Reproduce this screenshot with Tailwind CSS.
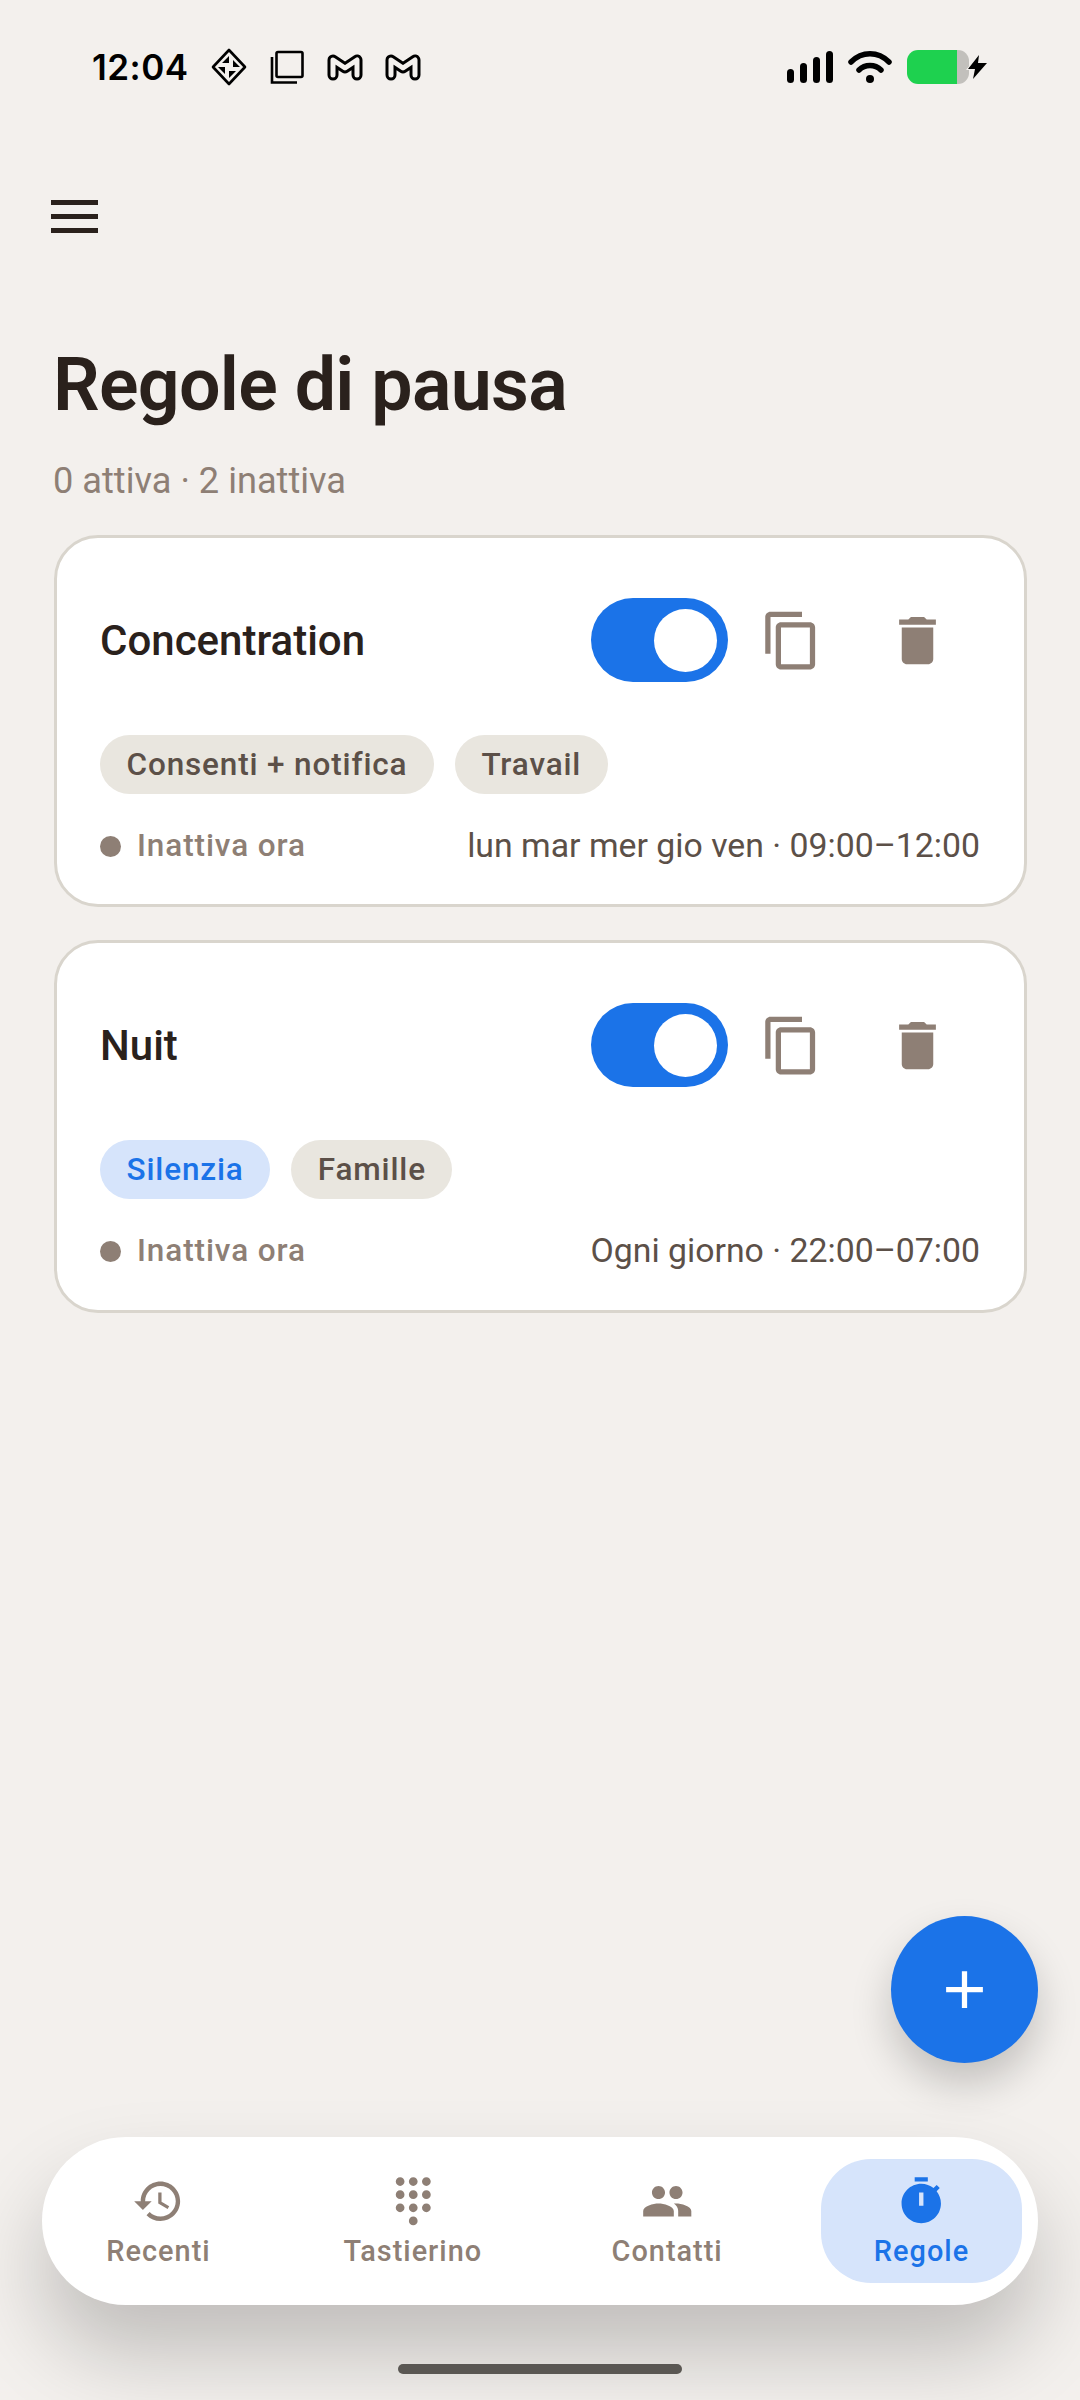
<!DOCTYPE html>
<html lang="it">
<head>
    <meta charset="UTF-8">
    <meta name="viewport" content="width=device-width, initial-scale=1.0">
    <title>Regole di pausa</title>
    <script src="https://cdn.jsdelivr.net/npm/@tailwindcss/browser@4"></script>
</head>
<body class="bg-[#f3f0ed] font-['Roboto',sans-serif] overflow-hidden">
    <div class="flex flex-col w-[1080px] h-[2400px]">

        <!-- Status bar -->
        <div class="flex items-center justify-between h-[134px] pl-[92px] pr-[91px] text-black">
            <div class="flex items-center">
                <span class="font-['Inter',sans-serif] font-semibold text-[35px] leading-none tracking-[0.5px] w-[119px]">12:04</span>
                <svg class="w-[36px] h-[38px]" viewBox="0 0 36 38">
                    <path d="M18 2 34 19 18 36 2 19Z" fill="none" stroke="#000" stroke-width="2.6" stroke-linejoin="round"/>
                    <path d="M18 8 11 15h7zM29 19 22 12v7zM18 30 25 23h-7zM7 19 14 26v-7z" fill="#000"/>
                </svg>
                <svg class="w-[34px] h-[34px] ml-[23px]" viewBox="0 0 34 34" fill="none" stroke="#000" stroke-width="2.6">
                    <rect x="6.5" y="2" width="26" height="25" rx="1.5"/>
                    <path d="M2 7V32.5H27"/>
                </svg>
                <svg class="w-[38px] h-[30px] ml-[22px]" viewBox="0 0 38 30" fill="none" stroke-linejoin="round" stroke-linecap="round">
                    <path d="M7 23V8L19 16 31 8V23" stroke="#000" stroke-width="11"/>
                    <path d="M7 23V8L19 16 31 8V23" stroke="#f3f0ed" stroke-width="5"/>
                </svg>
                <svg class="w-[38px] h-[30px] ml-[20px]" viewBox="0 0 38 30" fill="none" stroke-linejoin="round" stroke-linecap="round">
                    <path d="M7 23V8L19 16 31 8V23" stroke="#000" stroke-width="11"/>
                    <path d="M7 23V8L19 16 31 8V23" stroke="#f3f0ed" stroke-width="5"/>
                </svg>
            </div>
            <div class="flex items-center">
                <svg class="w-[46px] h-[34px]" viewBox="0 0 46 34" fill="#000">
                    <rect x="0" y="19" width="7" height="14" rx="3.5"/>
                    <rect x="13" y="13" width="7" height="20" rx="3.5"/>
                    <rect x="26" y="7" width="7" height="26" rx="3.5"/>
                    <rect x="39" y="1" width="7" height="32" rx="3.5"/>
                </svg>
                <svg class="w-[44px] h-[34px] ml-[15px]" viewBox="0 0 44 34" fill="none" stroke="#000" stroke-width="5.5" stroke-linecap="round">
                    <path d="M3 12C14 1 30 1 41 12"/>
                    <path d="M11 20C17 14 27 14 33 20"/>
                    <circle cx="22" cy="29" r="4" fill="#000" stroke="none"/>
                </svg>
                <div class="flex h-[34px] w-[62px] ml-[15px] rounded-[11px] overflow-hidden">
                    <div class="w-[50px] bg-[#1ed14f]"></div>
                    <div class="flex-1 bg-[#c2c0bc]"></div>
                </div>
                <svg class="w-[23px] h-[26px] -ml-[3px]" viewBox="0 0 23 26" fill="#000" stroke="#f3f0ed" stroke-width="2" paint-order="stroke">
                    <path d="M13 1 2 15h7l-2 10 14-16h-9z"/>
                </svg>
            </div>
        </div>

        <!-- Menu button -->
        <div class="pl-[51px] mt-[66px]">
            <div class="flex flex-col gap-[9px] w-[47px]">
                <div class="h-[5px] bg-[#2a211c]"></div>
                <div class="h-[5px] bg-[#2a211c]"></div>
                <div class="h-[5px] bg-[#2a211c]"></div>
            </div>
        </div>

        <!-- Heading -->
        <h1 class="mt-[102px] ml-[53px] text-[73.5px] leading-[100px] font-semibold tracking-[-0.7px] text-[#2a211c]">Regole di pausa</h1>
        <p class="mt-[22px] ml-[53px] text-[36.2px] leading-[48px] text-[#8e7f75]">0 attiva · 2 inattiva</p>

        <!-- Rules -->
        <div class="flex flex-col gap-[33px] mx-[54px] mt-[30px] w-[973px]">
            <div class="h-[372px] bg-white border-[3px] border-[#d9d5cd] rounded-[44px] pl-[43px] pr-[44px] pt-[60px]">
                <div class="flex items-center h-[84px]">
                    <span class="flex-1 text-[42px] font-medium text-[#2a211c]">Concentration</span>
                    <div class="flex justify-end items-center w-[137px] h-[84px] pr-[11px] bg-[#1b73e8] rounded-full">
                        <div class="w-[63px] h-[63px] bg-white rounded-full"></div>
                    </div>
                    <div class="flex justify-center w-[126px]">
                        <svg class="w-[63px] h-[63px]" viewBox="0 0 24 24" fill="#8e7f75"><path d="M16 1H4c-1.1 0-2 .9-2 2v14h2V3h12V1zm3 4H8c-1.1 0-2 .9-2 2v14c0 1.1.9 2 2 2h11c1.1 0 2-.9 2-2V7c0-1.1-.9-2-2-2zm0 16H8V7h11v14z"/></svg>
                    </div>
                    <div class="flex justify-center w-[126px]">
                        <svg class="w-[63px] h-[63px]" viewBox="0 0 24 24" fill="#8e7f75"><path d="M6 19c0 1.1.9 2 2 2h8c1.1 0 2-.9 2-2V7H6v12zM19 4h-3.5l-1-1h-5l-1 1H5v2h14V4z"/></svg>
                    </div>
                </div>
                <div class="flex gap-[21px] mt-[53px]">
                    <span class="h-[59px] px-[26.5px] flex items-center rounded-full bg-[#e9e6df] text-[#5c5048] text-[31.5px] font-medium tracking-[0.85px]">Consenti + notifica</span>
                    <span class="h-[59px] px-[26.5px] flex items-center rounded-full bg-[#e9e6df] text-[#5c5048] text-[31.5px] font-medium tracking-[0.85px]">Travail</span>
                </div>
                <div class="flex items-center mt-[28px] h-[48px]">
                    <div class="w-[21px] h-[21px] rounded-full bg-[#8e7f75]"></div>
                    <span class="ml-[16px] flex-1 text-[31.5px] font-medium tracking-[0.9px] text-[#8e7f75]">Inattiva ora</span>
                    <span class="text-[33.8px] text-[#5c5048]">lun mar mer gio ven · 09:00–12:00</span>
                </div>
            </div>

            <div class="h-[373px] bg-white border-[3px] border-[#d9d5cd] rounded-[44px] pl-[43px] pr-[44px] pt-[60px]">
                <div class="flex items-center h-[84px]">
                    <span class="flex-1 text-[42px] font-medium text-[#2a211c]">Nuit</span>
                    <div class="flex justify-end items-center w-[137px] h-[84px] pr-[11px] bg-[#1b73e8] rounded-full">
                        <div class="w-[63px] h-[63px] bg-white rounded-full"></div>
                    </div>
                    <div class="flex justify-center w-[126px]">
                        <svg class="w-[63px] h-[63px]" viewBox="0 0 24 24" fill="#8e7f75"><path d="M16 1H4c-1.1 0-2 .9-2 2v14h2V3h12V1zm3 4H8c-1.1 0-2 .9-2 2v14c0 1.1.9 2 2 2h11c1.1 0 2-.9 2-2V7c0-1.1-.9-2-2-2zm0 16H8V7h11v14z"/></svg>
                    </div>
                    <div class="flex justify-center w-[126px]">
                        <svg class="w-[63px] h-[63px]" viewBox="0 0 24 24" fill="#8e7f75"><path d="M6 19c0 1.1.9 2 2 2h8c1.1 0 2-.9 2-2V7H6v12zM19 4h-3.5l-1-1h-5l-1 1H5v2h14V4z"/></svg>
                    </div>
                </div>
                <div class="flex gap-[21px] mt-[53px]">
                    <span class="h-[59px] px-[26.5px] flex items-center rounded-full bg-[#d6e4fb] text-[#1b73e8] text-[31.5px] font-medium tracking-[0.85px]">Silenzia</span>
                    <span class="h-[59px] px-[26.5px] flex items-center rounded-full bg-[#e9e6df] text-[#5c5048] text-[31.5px] font-medium tracking-[0.85px]">Famille</span>
                </div>
                <div class="flex items-center mt-[28px] h-[48px]">
                    <div class="w-[21px] h-[21px] rounded-full bg-[#8e7f75]"></div>
                    <span class="ml-[16px] flex-1 text-[31.5px] font-medium tracking-[0.9px] text-[#8e7f75]">Inattiva ora</span>
                    <span class="text-[33.8px] text-[#5c5048]">Ogni giorno · 22:00–07:00</span>
                </div>
            </div>
        </div>

        <div class="flex-1"></div>

        <!-- Add button -->
        <div class="flex justify-center items-center self-end mr-[42px] w-[147px] h-[147px] rounded-full bg-[#1b73e8] shadow-[0_21px_42px_rgba(0,0,0,0.2)]">
            <svg class="w-[63px] h-[63px]" viewBox="0 0 24 24" fill="#fff"><path d="M19 13h-6v6h-2v-6H5v-2h6V5h2v6h6v2z"/></svg>
        </div>

        <!-- Bottom navigation -->
        <div class="flex items-center justify-between mt-[74px] mx-[42px] h-[168px] px-[16px] bg-white rounded-[84px] shadow-[0_48px_84px_rgba(0,0,0,0.21)]">
            <div class="flex flex-col items-center w-[201px] h-[124px] pt-[16px]">
                <svg class="w-[52.5px] h-[52.5px]" viewBox="0 0 24 24" fill="#8e7f75"><path d="M13 3c-4.97 0-9 4.03-9 9H1l3.89 3.89.07.14L9 12H6c0-3.87 3.13-7 7-7s7 3.13 7 7-3.13 7-7 7c-1.93 0-3.68-.79-4.94-2.06l-1.42 1.42C8.27 19.99 10.51 21 13 21c4.97 0 9-4.03 9-9s-4.03-9-9-9zm-1 5v5l4.28 2.54.72-1.21-3.5-2.08V8H12z"/></svg>
                <span class="mt-[3px] text-[28.9px] leading-[40px] font-medium tracking-[1px] text-[#8e7f75]">Recenti</span>
            </div>
            <div class="flex flex-col items-center w-[201px] h-[124px] pt-[16px]">
                <svg class="w-[52.5px] h-[52.5px]" viewBox="0 0 24 24" fill="#8e7f75"><path d="M12 19c-1.1 0-2 .9-2 2s.9 2 2 2 2-.9 2-2-.9-2-2-2zM6 1c-1.1 0-2 .9-2 2s.9 2 2 2 2-.9 2-2-.9-2-2-2zm0 6c-1.1 0-2 .9-2 2s.9 2 2 2 2-.9 2-2-.9-2-2-2zm0 6c-1.1 0-2 .9-2 2s.9 2 2 2 2-.9 2-2-.9-2-2-2zm12-8c1.1 0 2-.9 2-2s-.9-2-2-2-2 .9-2 2 .9 2 2 2zm-6 8c-1.1 0-2 .9-2 2s.9 2 2 2 2-.9 2-2-.9-2-2-2zm6 0c-1.1 0-2 .9-2 2s.9 2 2 2 2-.9 2-2-.9-2-2-2zm0-6c-1.1 0-2 .9-2 2s.9 2 2 2 2-.9 2-2-.9-2-2-2zm-6 0c-1.1 0-2 .9-2 2s.9 2 2 2 2-.9 2-2-.9-2-2-2zm0-6c-1.1 0-2 .9-2 2s.9 2 2 2 2-.9 2-2-.9-2-2-2z"/></svg>
                <span class="mt-[3px] text-[28.9px] leading-[40px] font-medium tracking-[1px] text-[#8e7f75]">Tastierino</span>
            </div>
            <div class="flex flex-col items-center w-[201px] h-[124px] pt-[16px]">
                <svg class="w-[52.5px] h-[52.5px]" viewBox="0 0 24 24" fill="#8e7f75"><path d="M16 11c1.66 0 2.99-1.34 2.99-3S17.66 5 16 5c-1.66 0-3 1.34-3 3s1.34 3 3 3zm-8 0c1.66 0 2.99-1.34 2.99-3S9.66 5 8 5C6.34 5 5 6.34 5 8s1.34 3 3 3zm0 2c-2.33 0-7 1.17-7 3.5V19h14v-2.5c0-2.33-4.67-3.5-7-3.5zm8 0c-.29 0-.62.02-.97.05 1.16.84 1.97 1.97 1.97 3.45V19h6v-2.5c0-2.33-4.67-3.5-7-3.5z"/></svg>
                <span class="mt-[3px] text-[28.9px] leading-[40px] font-medium tracking-[1px] text-[#8e7f75]">Contatti</span>
            </div>
            <div class="flex flex-col items-center w-[201px] h-[124px] pt-[16px] rounded-[50px] bg-[#d6e4fb]">
                <svg class="w-[52.5px] h-[52.5px]" viewBox="0 0 24 24" fill="#1b73e8" fill-rule="evenodd"><path d="M15 1H9v2h6V1zm-4 13h2V8h-2v6zm8.03-6.61l1.42-1.42c-.43-.51-.9-.99-1.41-1.41l-1.42 1.42C16.07 4.74 14.12 4 12 4c-4.97 0-9 4.03-9 9s4.02 9 9 9 9-4.03 9-9c0-2.12-.74-4.07-1.97-5.61z"/></svg>
                <span class="mt-[3px] text-[28.9px] leading-[40px] font-medium tracking-[1px] text-[#1b73e8]">Regole</span>
            </div>
        </div>

        <!-- Home indicator -->
        <div class="mt-[59px] mb-[26px] mx-auto w-[284px] h-[10px] rounded-full bg-[#5a5753]"></div>
    </div>
</body>
</html>
